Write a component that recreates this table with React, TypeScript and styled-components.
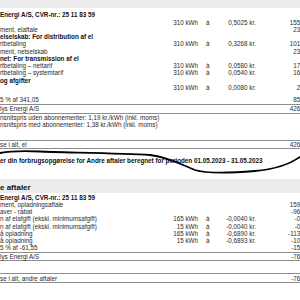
import styled, { createGlobalStyle } from 'styled-components';

const GlobalStyle = createGlobalStyle`
  html, body {
    margin: 0;
    padding: 0;
    background: #fff;
    overflow: hidden;
  }
  body {
    font-family: "Liberation Sans", Arial, sans-serif;
  }
`;

const Page = styled.div`
  position: relative;
  width: 310px;
  height: 300px;
  overflow: hidden;
  background: #fff;
  color: #2b2b2b;
  font-size: 6.3px;
  line-height: 7.25px;
`;

const TopBand = styled.div`
  height: 8px;
  background: #ececec;
`;

const Section = styled.section<{ $top: number }>`
  display: flex;
  flex-direction: column;
  margin-top: ${({ $top }) => $top}px;
`;

const Row = styled.div<{ $bold?: boolean }>`
  display: grid;
  grid-template-columns: 160px 38px 14px 44px 53px;
  height: 7.25px;
  white-space: nowrap;
  font-weight: ${({ $bold }) => ($bold ? 700 : 400)};
  color: ${({ $bold }) => ($bold ? '#111' : '#2b2b2b')};
`;

// sum-linjer med streg over og under
const TotalRow = styled(Row)<{ $h?: number; $gap?: number }>`
  box-sizing: border-box;
  height: ${({ $h }) => $h ?? 9}px;
  margin-top: ${({ $gap }) => $gap ?? 0}px;
  border-top: 1px solid #8c8c8c;
  border-bottom: 1px solid #8c8c8c;
  align-items: center;
`;

const Spacer = styled.div<{ $h: number }>`
  height: ${({ $h }) => $h}px;
`;

const Label = styled.span`
  overflow: visible;
`;

const Qty = styled.span`
  text-align: right;
`;

const At = styled.span`
  padding-left: 8px;
`;

const Price = styled.span`
  text-align: right;
`;

const Amount = styled.span`
  text-align: right;
`;

const Notice = styled.div`
  margin-top: 7.4px;
  height: 7.25px;
  font-weight: 700;
  color: #111;
  white-space: nowrap;
`;

const HeadBand = styled.div`
  margin-top: 15px;
  height: 14px;
  box-sizing: border-box;
  padding-top: 4px;
  background: #ececec;
  font-size: 8px;
  line-height: 9px;
  font-weight: 700;
  color: #111;
`;

// afrevet-papir streg hen over siden
const Tear = styled.svg`
  position: absolute;
  left: 0;
  top: 0;
  width: 300px;
  height: 300px;
  pointer-events: none;
`;

type Line = {
  label?: string;
  bold?: boolean;
  qty?: string;
  price?: string;
  amount?: string;
};

function LineRow({ label, bold, qty, price, amount }: Line) {
  return (
    <Row $bold={bold}>
      <Label>{label}</Label>
      <Qty>{qty}</Qty>
      <At>{qty ? 'à' : ''}</At>
      <Price>{price}</Price>
      <Amount>{amount}</Amount>
    </Row>
  );
}

function SumRow({ label, amount, h, gap }: { label: string; amount: string; h?: number; gap?: number }) {
  return (
    <TotalRow $h={h} $gap={gap}>
      <Label>{label}</Label>
      <Qty />
      <At />
      <Price />
      <Amount>{amount}</Amount>
    </TotalRow>
  );
}

const elLines: Line[] = [
  { label: 'Energi A/S, CVR-nr.: 25 11 83 59', bold: true },
  { qty: '310 kWh', price: '0,5025 kr.', amount: '155,78' },
  { label: 'ment, elaftale', amount: '23,96' },
  { label: 'elselskab: For distribution af el', bold: true },
  { label: 'rtbetaling', qty: '310 kWh', price: '0,3268 kr.', amount: '101,31' },
  { label: 'ment, netselskab', amount: '23,20' },
  { label: 'net: For transmission af el', bold: true },
  { label: 'rtbetaling – nettarif', qty: '310 kWh', price: '0,0580 kr.', amount: '17,98' },
  { label: 'rtbetaling – systemtarif', qty: '310 kWh', price: '0,0540 kr.', amount: '16,74' },
  { label: ' og afgifter', bold: true },
  { qty: '310 kWh', price: '0,0080 kr.', amount: '2,48' },
];

const andreLines: Line[] = [
  { label: 'Energi A/S, CVR-nr.: 25 11 83 59', bold: true },
  { label: 'ment, opladningsaftale', amount: '159,00' },
  { label: 'aver - rabat', amount: '-96,00' },
  { label: 'n af elafgift (ekskl. minimumsafgift)', qty: '165 kWh', price: '-0,0040 kr.', amount: '-0,66' },
  { label: 'n af elafgift (ekskl. minimumsafgift)', qty: '15 kWh', price: '-0,0040 kr.', amount: '-0,06' },
  { label: 'å opladning', qty: '165 kWh', price: '-0,6890 kr.', amount: '-113,69' },
  { label: 'å opladning', qty: '15 kWh', price: '-0,6893 kr.', amount: '-10,34' },
  { label: '5 % af -61,55', amount: '-15,39' },
];

export default function App() {
  return (
    <>
      <GlobalStyle />
      <Page>
        <TopBand />

        <Section $top={3.4}>
          {elLines.map((l, i) => (
            <LineRow key={i} {...l} />
          ))}
          <Spacer $h={5} />
          <LineRow label="5 % af 341,05" amount="85,26" />
          <SumRow label="lys Energi A/S" amount="426,31" h={10} gap={0.6} />
          <LineRow label="nsnitspris uden abonnementer: 1,19 kr./kWh (inkl. moms)" />
          <LineRow label="nsnitspris med abonnementer:  1,38 kr./kWh (inkl. moms)" />
          <SumRow label="se i alt, el" amount="426,31" gap={12} />
        </Section>

        <Notice>
          er din forbrugsopgørelse for Andre aftaler beregnet for perioden 01.05.2023 - 31.05.2023
        </Notice>

        <HeadBand>e aftaler</HeadBand>

        <Section $top={0.5}>
          {andreLines.map((l, i) => (
            <LineRow key={i} {...l} />
          ))}
          <SumRow label="lys Energi A/S" amount="-76,94" />
          <SumRow label="se i alt, andre aftaler" amount="-76,94" h={10} gap={12.6} />
        </Section>

        <Tear viewBox="0 0 300 300">
          <path
            d="M0,153 C10,151 22,150.5 40,151.5 S120,153 150,155 C168,157 180,164 195,170 C206,173.5 230,173 255,171 C275,169.5 290,164 300,157"
            fill="none"
            stroke="#000"
            strokeWidth="1.8"
            strokeLinecap="round"
          />
        </Tear>
      </Page>
    </>
  );
}
